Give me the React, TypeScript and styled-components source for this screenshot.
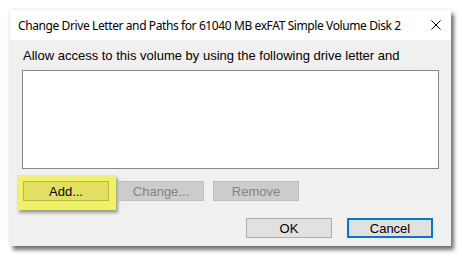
import React from "react";
import styled, { createGlobalStyle, css } from "styled-components";

const Global = createGlobalStyle`
  html, body { margin: 0; padding: 0; background: #ffffff; }
  body { width: 462px; height: 258px; overflow: hidden; }
`;

const Page = styled.div`
  padding: 10px 0 0 10px;
`;

const Window = styled.div`
  width: 441px;
  height: 236px;
  display: flex;
  flex-direction: column;
  background: #f0f0f0;
  box-shadow: 0 0 4px rgba(0, 0, 0, 0.12), 3px 4px 4px rgba(0, 0, 0, 0.55);
`;

const TitleBar = styled.div`
  height: 30px;
  flex: none;
  background: #ffffff;
  display: flex;
  align-items: center;
  justify-content: space-between;
  padding: 0 10px 0 8px;
`;

const Title = styled.span`
  font-family: "Noto Sans", sans-serif;
  font-size: 12px;
  letter-spacing: -0.4px;
  color: #000;
  white-space: nowrap;
`;

const Close = styled.svg`
  width: 10px;
  height: 10px;
  display: block;
`;

const Body = styled.div`
  flex: 1;
  display: flex;
  flex-direction: column;
  padding: 8px 12px 0 12px;
  font-family: "Liberation Sans", sans-serif;
  font-size: 13px;
`;

const Label = styled.div`
  height: 16px;
  line-height: 16px;
  padding-left: 1px;
  color: #000;
  white-space: nowrap;
`;

const ListBox = styled.div`
  margin-top: 6px;
  height: 99px;
  background: #ffffff;
  border: 1px solid #828790;
  box-sizing: border-box;
`;

const ActionRow = styled.div`
  display: flex;
  gap: 9px;
  margin-top: 12px;
  padding-left: 1px;
`;

const Highlight = styled.div`
  margin: -6px -7px -9px -6px;
  padding: 6px 7px 9px 6px;
  background: #f1f166;
  box-shadow: 2px 3px 3px rgba(0, 0, 0, 0.35);
  display: flex;
`;

const Button = styled.div<{ $variant?: "normal" | "disabled" | "default" | "marked" }>`
  width: 86px;
  height: 20px;
  box-sizing: border-box;
  display: flex;
  align-items: center;
  justify-content: center;
  font-family: "Liberation Sans", sans-serif;
  font-size: 13px;
  background: #e1e1e1;
  border: 1px solid #adadad;
  color: #000;
  ${(p) =>
    p.$variant === "disabled" &&
    css`
      background: #cccccc;
      border-color: #bfbfbf;
      color: #838383;
    `}
  ${(p) =>
    p.$variant === "default" &&
    css`
      border: 2px solid #0078d7;
    `}
  ${(p) =>
    p.$variant === "marked" &&
    css`
      background: #e2e062;
      border-color: #b9b845;
    `}
`;

const DialogRow = styled.div`
  display: flex;
  justify-content: flex-end;
  gap: 15px;
  margin-top: 17px;
  padding-right: 6px;
`;

export default function App() {
  return (
    <>
      <Global />
      <Page>
        <Window>
          <TitleBar>
            <Title>Change Drive Letter and Paths for 61040 MB exFAT Simple Volume Disk 2</Title>
            <Close viewBox="0 0 10 10">
              <path d="M0.5 0.5 L9.5 9.5 M9.5 0.5 L0.5 9.5" stroke="#000" strokeWidth="1" fill="none" />
            </Close>
          </TitleBar>
          <Body>
            <Label>Allow access to this volume by using the following drive letter and</Label>
            <ListBox />
            <ActionRow>
              <Highlight>
                <Button $variant="marked">Add...</Button>
              </Highlight>
              <Button $variant="disabled">Change...</Button>
              <Button $variant="disabled">Remove</Button>
            </ActionRow>
            <DialogRow>
              <Button>OK</Button>
              <Button $variant="default">Cancel</Button>
            </DialogRow>
          </Body>
        </Window>
      </Page>
    </>
  );
}
